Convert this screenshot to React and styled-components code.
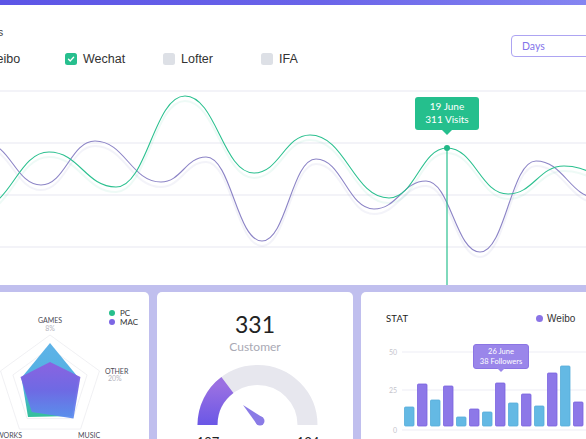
import React from "react";
import styled, { createGlobalStyle } from "styled-components";

const GlobalStyle = createGlobalStyle`
  html, body {
    margin: 0;
    padding: 0;
    width: 586px;
    height: 439px;
    overflow: hidden;
    background: #c0bfee;
    font-family: Lato, "Liberation Sans", sans-serif;
  }
`;

// curve data (chart coordinates)
const greenPts = [[-20, 122], [49, 67], [116, 102], [185, 11], [254, 88], [310, 50], [389, 113], [447, 63], [508, 109], [564, 81], [620, 95]];
const purplePts = [[-15, 58], [41, 100], [95, 56], [161, 97], [206, 72], [262, 156], [316, 74], [374, 124], [426, 96], [480, 167], [536, 76], [598, 113]];

const wave = (pts, off = 0) => {
  let d = `M${pts[0][0]},${pts[0][1] + off}`;
  for (let i = 1; i < pts.length; i++) {
    const [x0, y0] = pts[i - 1];
    const [x1, y1] = pts[i];
    const dx = (x1 - x0) * 0.45;
    d += ` C${x0 + dx},${y0 + off} ${x1 - dx},${y1 + off} ${x1},${y1 + off}`;
  }
  return d;
};

const bars = [407, 384, 400, 386, 417, 409, 412, 383, 403, 394, 406, 373, 366, 402];

const filters = [
  { name: "Weibo", checked: false },
  { name: "Wechat", checked: true },
  { name: "Lofter", checked: false },
  { name: "IFA", checked: false },
];

const App = () => {
  return (
    <Page>
      <GlobalStyle />
      <TopBar />
      <Panel>
        <Header>
          <HeaderLeft>
            <Title>Sources</Title>
            <Filters>
              {filters.map((f) => (
                <Filter key={f.name}>
                  <Check checked={f.checked}>
                    {f.checked && (
                      <svg width="8" height="8" viewBox="0 0 8 8">
                        <path d="M1.5 4.2 L3.3 5.9 L6.6 2.3" fill="none" stroke="#fff" strokeWidth="1.4" strokeLinecap="round" strokeLinejoin="round" />
                      </svg>
                    )}
                  </Check>
                  {f.name}
                </Filter>
              ))}
            </Filters>
          </HeaderLeft>
          <Select>Days</Select>
        </Header>
        <Chart>
          <svg width="586" height="200" viewBox="0 0 586 200">
            {[6, 58, 110, 162].map((y) => (
              <line key={y} x1="0" x2="586" y1={y} y2={y} stroke="#efeff6" strokeWidth="1.5" />
            ))}
            <path d={wave(greenPts, 5)} fill="none" stroke="#2bc08f" strokeOpacity="0.08" strokeWidth="2" />
            <path d={wave(purplePts, 5)} fill="none" stroke="#8e86c7" strokeOpacity="0.1" strokeWidth="2" />
            <path d={wave(purplePts)} fill="none" stroke="#8c84c6" strokeWidth="1.1" />
            <path d={wave(greenPts)} fill="none" stroke="#2bc08f" strokeWidth="1.1" />
            <line x1="447" x2="447" y1="63" y2="200" stroke="#2bc08f" strokeWidth="1.2" />
            <circle cx="447" cy="63" r="3" fill="#22b888" />
          </svg>
          <ChartTip>
            19 June
            <br />
            311 Visits
          </ChartTip>
        </Chart>
      </Panel>

      <Cards>
        <Card>
          <svg width="160" height="150" viewBox="-11 292 160 150">
            <defs>
              <linearGradient id="pc" x1="0" y1="0" x2="0" y2="1">
                <stop offset="0" stopColor="#5fb3e8" />
                <stop offset="0.6" stopColor="#4fb0e0" />
                <stop offset="1" stopColor="#33c09a" />
              </linearGradient>
              <linearGradient id="mac" x1="0" y1="0" x2="0" y2="1">
                <stop offset="0" stopColor="#8d5fe0" />
                <stop offset="0.5" stopColor="#7066e4" />
                <stop offset="1" stopColor="#5b8ef0" />
              </linearGradient>
            </defs>
            {[52, 39].map((r) => (
              <polygon
                key={r}
                points={[90, 18, -54, 234, 162]
                  .map((a) => {
                    const t = (a * Math.PI) / 180;
                    return `${50 + r * Math.cos(t)},${387 - r * Math.sin(t)}`;
                  })
                  .join(" ")}
                fill="none"
                stroke="#ececf0"
                strokeWidth="0.8"
              />
            ))}
            <polygon points="50,343 78.5,377.7 72,416 28,417 21.5,377.7" fill="url(#pc)" />
            <polygon points="50,362 80.4,377 73.5,418.5 31.8,412 20.5,377" fill="url(#mac)" opacity="0.95" />
            <RadarLabel x="50" y="323" textAnchor="middle">GAMES</RadarLabel>
            <RadarValue x="50" y="331" textAnchor="middle">8%</RadarValue>
            <RadarLabel x="105" y="374">OTHER</RadarLabel>
            <RadarValue x="108" y="381">20%</RadarValue>
            <RadarLabel x="22" y="438" textAnchor="end">WORKS</RadarLabel>
            <RadarLabel x="78" y="438">MUSIC</RadarLabel>
          </svg>
          <Legend>
            <LegendItem><Dot color="#26bf8c" />PC</LegendItem>
            <LegendItem><Dot color="#7c66e4" />MAC</LegendItem>
          </Legend>
        </Card>

        <Card>
          <Number>331</Number>
          <Caption>Customer</Caption>
          <Gauge width="150" height="90" viewBox="180 360 150 90">
            <defs>
              <linearGradient id="gauge" x1="0" y1="0" x2="0" y2="1">
                <stop offset="0" stopColor="#9a70e2" />
                <stop offset="1" stopColor="#6a57e6" />
              </linearGradient>
            </defs>
            <path d="M207.5,425 A50,50 0 0 1 307.5,425" fill="none" stroke="#e7e7ee" strokeWidth="20" />
            <path d="M207.5,425 A50,50 0 0 1 227.4,385.1" fill="none" stroke="url(#gauge)" strokeWidth="20" />
            <polygon points="243,405 263.1,417.7 256.9,424.3" fill="#8a7be6" />
            <circle cx="260" cy="421" r="4.5" fill="#8a7be6" />
            <GaugeValue x="208" y="447" textAnchor="middle">197</GaugeValue>
            <GaugeValue x="308" y="447" textAnchor="middle">134</GaugeValue>
          </Gauge>
        </Card>

        <Card>
          <StatHeader>
            <StatTitle>STAT</StatTitle>
            <Legend2>
              <LegendItem2><Dot2 color="#8a74e6" />Weibo</LegendItem2>
              <LegendItem2><Dot2 color="#62b8e4" />Wechat</LegendItem2>
            </Legend2>
          </StatHeader>
          <BarChart width="296" height="100" viewBox="361 340 296 100">
            {[
              [352, "50"],
              [390, "25"],
              [430, "0"],
            ].map(([y, t]) => (
              <g key={t}>
                <line x1="402" x2="657" y1={y} y2={y} stroke="#ededf5" strokeWidth="1" />
                <AxisText x="397" y={y + 3} textAnchor="end">{t}</AxisText>
              </g>
            ))}
            {bars.map((top, i) => (
              <rect
                key={i}
                x={404.5 + 13 * i}
                y={top}
                width="9.5"
                height={426 - top}
                rx="1"
                fill={i % 2 ? "#8d78e8" : "#64b9e4"}
                stroke={i % 2 ? "#7a63de" : "#55acd9"}
                strokeWidth="0.8"
              />
            ))}
          </BarChart>
          <BarTip>
            26 June
            <br />
            38 Followers
          </BarTip>
        </Card>
      </Cards>
    </Page>
  );
};

const Page = styled.div`
  width: 586px;
  height: 439px;
  overflow: hidden;
`;

const TopBar = styled.div`
  height: 5px;
  background: linear-gradient(90deg, #5c55e6, #6a64e9 55%, #8585f1);
`;

const Panel = styled.div`
  background: #fff;
  height: 280px;
`;

const Header = styled.div`
  height: 80px;
  display: flex;
  justify-content: space-between;
`;

const HeaderLeft = styled.div`
  display: flex;
  flex-direction: column;
  margin-left: -42px;
`;

const Title = styled.div`
  margin-top: 21px;
  margin-left: 5px;
  font-size: 11px;
  line-height: 13px;
  color: #444;
  font-family: "Liberation Sans", sans-serif;
`;

const Filters = styled.div`
  display: flex;
  margin-top: 13px;
`;

const Filter = styled.label`
  display: flex;
  align-items: center;
  gap: 6px;
  width: 98px;
  font-family: "Liberation Sans", sans-serif;
  font-size: 12.5px;
  color: #333;
  &:first-child {
    margin-left: 9px;
  }
`;

const Check = styled.span`
  width: 12px;
  height: 12px;
  border-radius: 2.5px;
  background: ${(p) => (p.checked ? "#27bf8e" : "#dde0e6")};
  display: flex;
  align-items: center;
  justify-content: center;
`;

const Select = styled.div`
  margin-top: 30px;
  margin-right: -41px;
  width: 104px;
  height: 20px;
  border: 1px solid #ada4f2;
  border-radius: 4px;
  box-sizing: content-box;
  padding-left: 10px;
  font-size: 10.5px;
  line-height: 20px;
  color: #8374ea;
`;

const Chart = styled.div`
  position: relative;
  height: 200px;
  svg {
    display: block;
  }
`;

const ChartTip = styled.div`
  position: absolute;
  left: 415px;
  top: 12px;
  width: 64px;
  height: 33px;
  border-radius: 3px;
  background: #25bf8d;
  color: #fff;
  font-size: 10px;
  line-height: 13px;
  text-align: center;
  box-sizing: border-box;
  padding-top: 3px;
  &::after {
    content: "";
    position: absolute;
    left: 27px;
    bottom: -5px;
    border-left: 5px solid transparent;
    border-right: 5px solid transparent;
    border-top: 5px solid #25bf8d;
  }
`;

const Cards = styled.div`
  display: grid;
  grid-template-columns: 160px 196px 296px;
  gap: 8px;
  margin-left: -11px;
  padding-top: 7px;
`;

const Card = styled.div`
  position: relative;
  height: 170px;
  background: #fff;
  border-radius: 5px;
  display: flex;
  flex-direction: column;
  svg {
    display: block;
  }
`;

const RadarLabel = styled.text`
  font-size: 7px;
  fill: #4a4a55;
  font-family: Lato, sans-serif;
`;

const RadarValue = styled.text`
  font-size: 7px;
  fill: #b4b4be;
  font-family: Lato, sans-serif;
`;

const Legend = styled.div`
  position: absolute;
  left: 120px;
  top: 17px;
  display: flex;
  flex-direction: column;
  gap: 1px;
`;

const LegendItem = styled.div`
  display: flex;
  align-items: center;
  gap: 5px;
  font-size: 8px;
  line-height: 8px;
  color: #333;
`;

const Dot = styled.span`
  width: 6px;
  height: 6px;
  border-radius: 50%;
  background: ${(p) => p.color};
`;

const Number = styled.div`
  margin-top: 18px;
  text-align: center;
  font-size: 23px;
  line-height: 28px;
  color: #222;
`;

const Caption = styled.div`
  margin-top: 2px;
  text-align: center;
  font-size: 12px;
  line-height: 14px;
  color: #a9a9b4;
`;

const Gauge = styled.svg`
  margin: 6px auto 0;
`;

const GaugeValue = styled.text`
  font-size: 13px;
  fill: #222;
  font-family: Lato, sans-serif;
`;

const StatHeader = styled.div`
  display: flex;
  align-items: center;
  margin-top: 20px;
  padding: 0 25px;
  height: 12px;
`;

const StatTitle = styled.div`
  font-size: 9.5px;
  color: #222;
  letter-spacing: 0.2px;
`;

const Legend2 = styled.div`
  display: flex;
  gap: 12px;
  margin-left: auto;
`;

const LegendItem2 = styled.div`
  display: flex;
  align-items: center;
  gap: 4px;
  font-family: "Liberation Sans", sans-serif;
  font-size: 10px;
  color: #333;
`;

const Dot2 = styled.span`
  width: 7px;
  height: 7px;
  border-radius: 50%;
  background: ${(p) => p.color};
`;

const BarChart = styled.svg`
  margin-top: 16px;
`;

const AxisText = styled.text`
  font-size: 7px;
  fill: #c4c4cc;
  font-family: Lato, sans-serif;
`;

const BarTip = styled.div`
  position: absolute;
  left: 112px;
  top: 52px;
  width: 56px;
  height: 25px;
  box-sizing: border-box;
  border-radius: 3px;
  background: #9a86ea;
  border: 1px solid #8b75e4;
  color: #fff;
  font-size: 7.5px;
  line-height: 10px;
  text-align: center;
  padding-top: 2px;
  &::after {
    content: "";
    position: absolute;
    left: 23px;
    bottom: -4px;
    border-left: 4px solid transparent;
    border-right: 4px solid transparent;
    border-top: 4px solid #9a86ea;
  }
`;

export default App;
